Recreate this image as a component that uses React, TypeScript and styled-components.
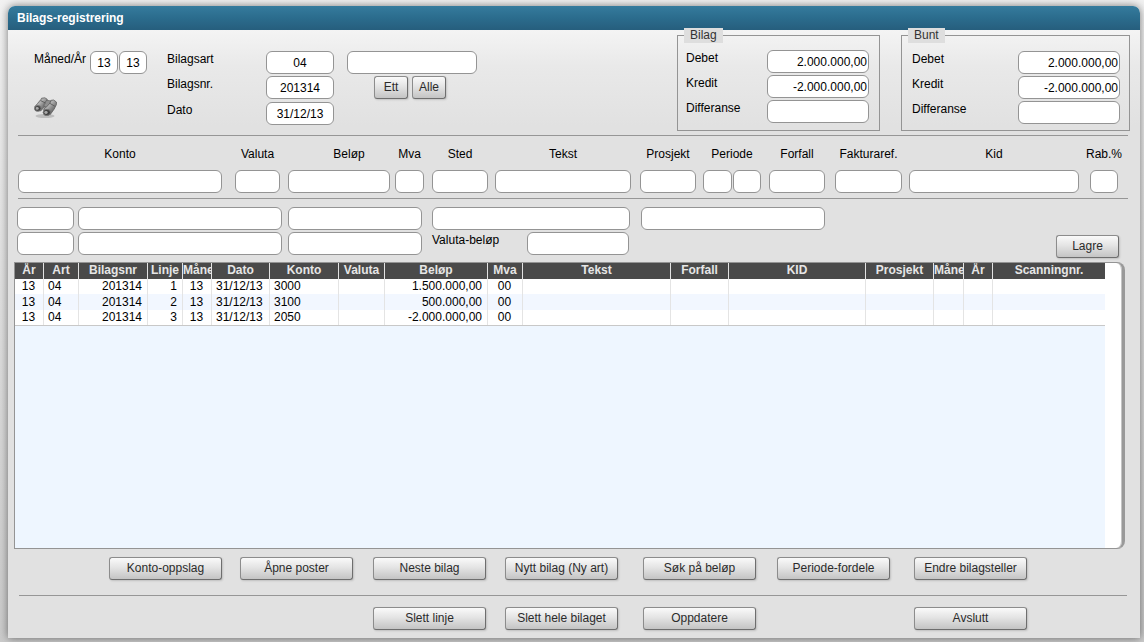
import React from "react";
import styled, { createGlobalStyle, css } from "styled-components";

const GlobalStyle = createGlobalStyle`
  *, *::before, *::after { box-sizing: border-box; }
  html { background: #d4d4d4; }
  body {
    margin: 0;
    font: 12px/16px "Liberation Sans", Arial, sans-serif;
    color: #000;
  }
  button, input { font: inherit; color: inherit; margin: 0; }
`;

const Page = styled.div`
  min-height: 100vh;
  min-width: 1100px;
  display: flex;
  padding: 6px 4px 4px 8px;
  background: linear-gradient(#f2f2f2, #cbcbcb);
`;

const Window = styled.main`
  flex: 1;
  min-width: 0;
  display: flex;
  flex-direction: column;
  border-radius: 7px 7px 0 0;
  background: linear-gradient(#f4f4f4 24px, #e9e9e9 60px, #e1e1e1 120px);
  box-shadow: 0 0 8px rgba(0, 0, 0, 0.5);
`;

const TitleBar = styled.h1`
  margin: 0;
  height: 24px;
  padding: 0 9px;
  border-radius: 7px 7px 0 0;
  background: linear-gradient(#357b9d, #2b6c8d 50%, #265e7d);
  color: #fff;
  font-size: 12px;
  line-height: 24px;
  font-weight: bold;
`;

const Divider = styled.hr`
  width: auto;
  height: 1px;
  margin: 0 12px 0 10px;
  border: 0;
  background: #969696;
`;

const TextBox = styled.input<{ $w?: number; $align?: string }>`
  display: block;
  width: ${(p) => (p.$w ? `${p.$w}px` : "100%")};
  min-width: 0;
  height: 23px;
  padding: 0 1px;
  border: 1px solid #949494;
  border-radius: 6px;
  background: #fff;
  text-align: ${(p) => p.$align ?? "left"};
`;

const Button = styled.button<{ $w: number }>`
  width: ${(p) => p.$w}px;
  height: 23px;
  padding: 0 0 1px;
  border: 1px solid #8c8c8c;
  border-right-color: #6e6e6e;
  border-bottom-color: #6e6e6e;
  border-radius: 3px;
  background: linear-gradient(#fafafa, #e4e4e4 45%, #c4c4c4);
  box-shadow: 1px 1px 2px rgba(0, 0, 0, 0.15);
  color: #2b2b2b;
  white-space: nowrap;
`;

const Header = styled.section`
  display: flex;
  align-items: flex-start;
  height: 105px;
  padding: 0 10px 0 26px;
`;

const PeriodBlock = styled.div`
  width: 133px;
  padding-top: 21px;
`;

const PeriodRow = styled.div`
  display: flex;
  gap: 1px;
  margin-bottom: 23px;
`;

const PeriodLabel = styled.label`
  width: 55px;
`;

const IconButton = styled.button`
  display: block;
  padding: 0;
  border: 0;
  background: none;
`;

const VoucherGrid = styled.div`
  display: grid;
  grid-template-columns: 99px 68px 130px;
  grid-template-rows: 25px 26px 23px;
  padding-top: 21px;
`;

const VoucherExtra = styled.div`
  padding-left: 13px;
  width: 143px;
`;

const ButtonPair = styled.div`
  display: flex;
  gap: 4px;
  padding-left: 40px;
`;

const Spacer = styled.div<{ $grow?: number }>`
  flex: ${(p) => p.$grow ?? 1} 1 0;
`;

const Totals = styled.fieldset<{ $w: number; $top: number }>`
  position: relative;
  width: ${(p) => p.$w}px;
  height: 103px;
  margin: -2px 0 0;
  padding: ${(p) => p.$top}px 10px 0 8px;
  border: 1px solid #949494;

  & + & {
    margin-left: 21px;
    padding-right: 9px;
    padding-left: 10px;
  }
`;

const Legend = styled.legend`
  height: 15px;
  margin-left: -2px;
  padding: 0 6px;
  background: #dedede;
  color: #333;
  line-height: 15px;

  ${Totals} + ${Totals} & {
    margin-left: -4px;
  }
`;

const TotalRow = styled.div`
  display: flex;
  justify-content: space-between;
  height: 25px;
`;

const FieldRow = styled.section`
  display: flex;
  height: 62px;
  padding: 10px 22px 0 10px;
`;

const Field = styled.div<{ $w: number; $gap: number; $indent?: number }>`
  flex: ${(p) => p.$w} 1 ${(p) => p.$w}px;
  min-width: 0;
  margin-left: ${(p) => p.$gap}px;
  display: flex;
  flex-direction: column;
  align-items: center;

  label {
    margin-bottom: 8px;
    padding-left: ${(p) => p.$indent ?? 0}px;
    white-space: nowrap;
  }
`;

const Pair = styled.div`
  display: flex;
  gap: 1px;
  width: 100%;
`;

const Details = styled.section`
  padding: 8px 21px 4px 9px;
`;

const DetailRow = styled.div`
  display: flex;
  align-items: flex-start;

  & + & {
    margin-top: 2px;
  }
`;

const Slot = styled.div<{ $w: number; $gap?: number }>`
  flex: ${(p) => p.$w} 1 ${(p) => p.$w}px;
  min-width: 0;
  margin-left: ${(p) => p.$gap ?? 0}px;
`;

const SaveSlot = styled.div`
  padding-top: 3px;
`;

const ListFrame = styled.section`
  flex: 1;
  min-height: 120px;
  display: flex;
  margin: 0 15px 0 6px;
  border: 1px solid #949494;
  border-right: 3px solid #999;
  border-radius: 0 8px 8px 0;
  background: #fff;
  box-shadow: inset -1px 0 0 #c4c4c4;
  overflow: hidden;
`;

const ListBody = styled.div`
  flex: 1;
  min-width: 0;
  margin-right: 17px;
  background: #eef6ff;
`;

const Table = styled.table`
  width: 100%;
  table-layout: fixed;
  border-collapse: separate;
  border-spacing: 0;
  border-bottom: 1px solid #c8c8c8;
`;

const cell = css`
  border-right: 1px solid #e4e4e4;
  overflow: hidden;
  white-space: nowrap;

  &:last-child {
    border-right: 0;
  }
`;

const Th = styled.th<{ $clip?: boolean }>`
  ${cell}
  height: 16px;
  padding: 0 ${(p) => (p.$clip ? 0 : 1)}px;
  background: #4a4a4a;
  color: #e6e6e6;
  line-height: 14px;
  vertical-align: top;
  text-align: ${(p) => (p.$clip ? "left" : "center")};
`;

const Tr = styled.tr`
  height: 15px;
  background: #fff;

  &:nth-child(even) {
    height: 16px;
    background: #f2f7ff;
  }
`;

const Td = styled.td<{ $align?: string }>`
  ${cell}
  padding: 0 5px 0 4px;
  line-height: 15px;
  text-align: ${(p) => p.$align ?? "left"};
`;

const Actions = styled.div`
  display: grid;
  grid-template-columns: 131fr 133fr 132fr 138fr 134fr 137fr 113px;
  padding: 8px 113px 0 101px;
  height: 46px;
`;

const FooterActions = styled(Actions)`
  padding-top: 11px;
  height: 42px;
`;

const ActionCell = styled.div<{ $col: number }>`
  grid-column: ${(p) => p.$col};
`;

const FooterDivider = styled(Divider)`
  margin: 0 13px 0 11px;
`;

function Binoculars() {
  return (
    <svg width="24" height="22" viewBox="0 0 24 22" aria-hidden="true">
      <defs>
        <linearGradient id="barrel" x1="0" y1="0" x2="1" y2="1">
          <stop offset="0.1" stopColor="#8a8a8a" />
          <stop offset="0.4" stopColor="#b0b0b0" />
          <stop offset="0.6" stopColor="#858585" />
          <stop offset="0.95" stopColor="#4e4e4e" />
        </linearGradient>
      </defs>
      <ellipse cx="11" cy="19" rx="9.5" ry="2" fill="#bdbdbd" />
      <path d="M0.8 9.8 3.6 6.4 6.8 2.6 7.6 1.2 10.8 0.8 13.2 2.2 13 5 11 9.4 6.6 14Z" fill="url(#barrel)" stroke="#636363" strokeWidth="0.8" />
      <path d="M9.6 13 12.4 8.6 15.8 5.4 16.8 3.4 19.6 3 22.4 5 22.4 7.6 20.2 12 16.2 17.6Z" fill="url(#barrel)" stroke="#5a5a5a" strokeWidth="0.8" />
      <path d="M10.4 6.2 12.8 3.2 16.8 4 16 6 12.2 10.2 9.8 9.4Z" fill="#8f8f8f" stroke="#5c5c5c" strokeWidth="0.7" />
      <path d="M6.6 3.6 11.8 6.2M15.6 6.2 20.8 9.2" stroke="#525252" strokeWidth="0.8" />
      <ellipse cx="3.8" cy="11.4" rx="3.3" ry="2.9" fill="#444" stroke="#777" strokeWidth="0.9" />
      <ellipse cx="3.2" cy="11.4" rx="1.5" ry="1.3" fill="#a9a9a9" />
      <ellipse cx="12.8" cy="15.4" rx="3.7" ry="3.1" fill="#404040" stroke="#777" strokeWidth="0.9" />
      <ellipse cx="12" cy="15.5" rx="1.7" ry="1.4" fill="#a9a9a9" />
    </svg>
  );
}

interface FieldSpec {
  label: string;
  id: string;
  w: number;
  gap: number;
  indent?: number;
  pair?: boolean;
}

const fields: FieldSpec[] = [
  { label: "Konto", id: "konto", w: 204, gap: 0 },
  { label: "Valuta", id: "valuta", w: 45, gap: 13 },
  { label: "Beløp", id: "belop", w: 102, gap: 8, indent: 20 },
  { label: "Mva", id: "mva", w: 29, gap: 5 },
  { label: "Sted", id: "sted", w: 56, gap: 8 },
  { label: "Tekst", id: "tekst", w: 136, gap: 7 },
  { label: "Prosjekt", id: "prosjekt", w: 56, gap: 9 },
  { label: "Periode", id: "periode", w: 58, gap: 7, pair: true },
  { label: "Forfall", id: "forfall", w: 56, gap: 8 },
  { label: "Fakturaref.", id: "fakturaref", w: 67, gap: 10 },
  { label: "Kid", id: "kid", w: 170, gap: 7 },
  { label: "Rab.%", id: "rabatt", w: 28, gap: 11 },
];

interface Column {
  title: string;
  w: number;
  align?: string;
  clip?: boolean;
}

const columns: Column[] = [
  { title: "År", w: 29, align: "center" },
  { title: "Art", w: 35 },
  { title: "Bilagsnr", w: 69, align: "right" },
  { title: "Linje", w: 35, align: "right" },
  { title: "Måned", w: 29, align: "center", clip: true },
  { title: "Dato", w: 58 },
  { title: "Konto", w: 69 },
  { title: "Valuta", w: 46 },
  { title: "Beløp", w: 103, align: "right" },
  { title: "Mva", w: 35, align: "center" },
  { title: "Tekst", w: 148 },
  { title: "Forfall", w: 58 },
  { title: "KID", w: 137 },
  { title: "Prosjekt", w: 68 },
  { title: "Måned", w: 30, clip: true },
  { title: "År", w: 29 },
  { title: "Scanningnr.", w: 112 },
];

const rows: string[][] = [
  ["13", "04", "201314", "1", "13", "31/12/13", "3000", "", "1.500.000,00", "00"],
  ["13", "04", "201314", "2", "13", "31/12/13", "3100", "", "500.000,00", "00"],
  ["13", "04", "201314", "3", "13", "31/12/13", "2050", "", "-2.000.000,00", "00"],
];

const actions = [
  "Konto-oppslag",
  "Åpne poster",
  "Neste bilag",
  "Nytt bilag (Ny art)",
  "Søk på beløp",
  "Periode-fordele",
  "Endre bilagsteller",
];

const footerActions = [
  { title: "Slett linje", col: 3 },
  { title: "Slett hele bilaget", col: 4 },
  { title: "Oppdatere", col: 5 },
  { title: "Avslutt", col: 7 },
];

function TotalsBox({ title, id, w, top }: { title: string; id: string; w: number; top: number }) {
  const lines = [
    ["Debet", "2.000.000,00"],
    ["Kredit", "-2.000.000,00"],
    ["Differanse", ""],
  ];
  return (
    <Totals $w={w} $top={top}>
      <Legend>{title}</Legend>
      {lines.map(([label, value]) => (
        <TotalRow key={label}>
          <label htmlFor={`${id}-${label}`}>{label}</label>
          <TextBox id={`${id}-${label}`} $w={102} $align="right" defaultValue={value} />
        </TotalRow>
      ))}
    </Totals>
  );
}

export default function App() {
  return (
    <>
      <GlobalStyle />
      <Page>
        <Window>
          <TitleBar>Bilags-registrering</TitleBar>

          <Header>
            <PeriodBlock>
              <PeriodRow>
                <PeriodLabel htmlFor="maned">Måned/År</PeriodLabel>
                <TextBox id="maned" $w={28} $align="center" defaultValue="13" />
                <TextBox aria-label="År" $w={28} $align="center" defaultValue="13" />
              </PeriodRow>
              <IconButton type="button" aria-label="Søk">
                <Binoculars />
              </IconButton>
            </PeriodBlock>

            <VoucherGrid>
              <label htmlFor="bilagsart">Bilagsart</label>
              <TextBox id="bilagsart" $align="center" defaultValue="04" />
              <VoucherExtra>
                <TextBox aria-label="Bilagsart navn" $w={130} />
              </VoucherExtra>
              <label htmlFor="bilagsnr">Bilagsnr.</label>
              <TextBox id="bilagsnr" $align="center" defaultValue="201314" />
              <ButtonPair>
                <Button type="button" $w={34}>Ett</Button>
                <Button type="button" $w={34}>Alle</Button>
              </ButtonPair>
              <label htmlFor="dato">Dato</label>
              <TextBox id="dato" $align="center" defaultValue="31/12/13" />
            </VoucherGrid>

            <Spacer />
            <TotalsBox title="Bilag" id="bilag" w={203} top={7} />
            <TotalsBox title="Bunt" id="bunt" w={229} top={8} />
          </Header>

          <Divider />

          <FieldRow>
            {fields.map((f) => (
              <Field key={f.id} $w={f.w} $gap={f.gap} $indent={f.indent}>
                <label htmlFor={f.id}>{f.label}</label>
                {f.pair ? (
                  <Pair>
                    <TextBox id={f.id} />
                    <TextBox aria-label={`${f.label} til`} />
                  </Pair>
                ) : (
                  <TextBox id={f.id} />
                )}
              </Field>
            ))}
          </FieldRow>

          <Divider />

          <Details>
            <DetailRow>
              <Slot $w={57}><TextBox aria-label="Kontonummer" /></Slot>
              <Slot $w={204} $gap={4}><TextBox aria-label="Kontonavn" /></Slot>
              <Slot $w={134} $gap={6}><TextBox aria-label="Kontosaldo" /></Slot>
              <Slot $w={198} $gap={10}><TextBox aria-label="Stedsnavn" /></Slot>
              <Slot $w={184} $gap={11}><TextBox aria-label="Prosjektnavn" /></Slot>
              <Slot $w={294} />
            </DetailRow>
            <DetailRow>
              <Slot $w={57}><TextBox aria-label="Motkonto" /></Slot>
              <Slot $w={204} $gap={4}><TextBox aria-label="Motkontonavn" /></Slot>
              <Slot $w={134} $gap={6}><TextBox aria-label="Motkontosaldo" /></Slot>
              <Slot $w={85} $gap={10}><label htmlFor="valutabelop">Valuta-beløp</label></Slot>
              <Slot $w={102} $gap={10}><TextBox id="valutabelop" /></Slot>
              <Slot $w={427} />
              <SaveSlot>
                <Button type="button" $w={63}>Lagre</Button>
              </SaveSlot>
            </DetailRow>
          </Details>

          <ListFrame>
            <ListBody>
              <Table>
                <colgroup>
                  {columns.map((c, i) => (
                    <col key={i} style={{ width: c.w }} />
                  ))}
                </colgroup>
                <thead>
                  <tr>
                    {columns.map((c, i) => (
                      <Th key={i} scope="col" $clip={c.clip}>{c.title}</Th>
                    ))}
                  </tr>
                </thead>
                <tbody>
                  {rows.map((r) => (
                    <Tr key={r[3]}>
                      {columns.map((c, i) => (
                        <Td key={i} $align={c.align}>{r[i] ?? ""}</Td>
                      ))}
                    </Tr>
                  ))}
                </tbody>
              </Table>
            </ListBody>
          </ListFrame>

          <Actions>
            {actions.map((a, i) => (
              <ActionCell key={a} $col={i + 1}>
                <Button type="button" $w={113}>{a}</Button>
              </ActionCell>
            ))}
          </Actions>
          <FooterDivider />
          <FooterActions>
            {footerActions.map((a) => (
              <ActionCell key={a.title} $col={a.col}>
                <Button type="button" $w={113}>{a.title}</Button>
              </ActionCell>
            ))}
          </FooterActions>
        </Window>
      </Page>
    </>
  );
}
